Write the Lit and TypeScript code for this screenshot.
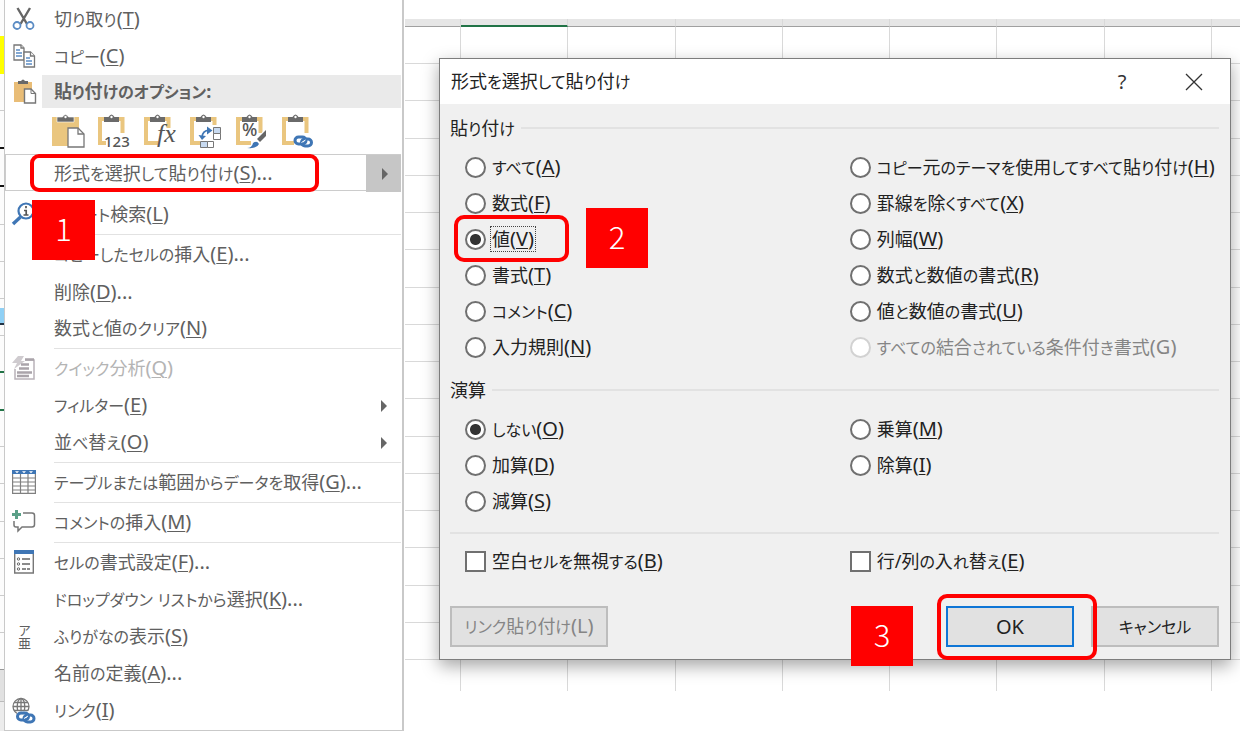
import { LitElement, html, css, svg, nothing, TemplateResult } from "lit";
import { customElement } from "lit/decorators.js";
import { classMap } from "lit/directives/class-map.js";

interface Item { text: string; key: string; more?: string; icon?: string; disabled?: boolean; arrow?: boolean; sep?: boolean; step?: string; }
interface Option { text: string; key: string; checked?: boolean; disabled?: boolean; focus?: boolean; }

const MENU_TOP: Item[] = [
  { text: "切り取り", key: "T", icon: "cut" },
  { text: "コピー", key: "C", icon: "copy" },
];

const MENU: Item[] = [
  { text: "スマート検索", key: "L", icon: "search", step: "1" },
  { text: "コピーしたセルの挿入", key: "E", more: "...", sep: true },
  { text: "削除", key: "D", more: "..." },
  { text: "数式と値のクリア", key: "N" },
  { text: "クイック分析", key: "Q", icon: "quick", disabled: true, sep: true },
  { text: "フィルター", key: "E", arrow: true },
  { text: "並べ替え", key: "O", arrow: true },
  { text: "テーブルまたは範囲からデータを取得", key: "G", more: "...", icon: "table", sep: true },
  { text: "コメントの挿入", key: "M", icon: "comment", sep: true },
  { text: "セルの書式設定", key: "F", more: "...", icon: "format", sep: true },
  { text: "ドロップダウン リストから選択", key: "K", more: "..." },
  { text: "ふりがなの表示", key: "S", icon: "ruby" },
  { text: "名前の定義", key: "A", more: "..." },
  { text: "リンク", key: "I", icon: "link" },
];

const PASTE: Option[][] = [
  [
    { text: "すべて", key: "A" },
    { text: "数式", key: "F" },
    { text: "値", key: "V", checked: true, focus: true },
    { text: "書式", key: "T" },
    { text: "コメント", key: "C" },
    { text: "入力規則", key: "N" },
  ],
  [
    { text: "コピー元のテーマを使用してすべて貼り付け", key: "H" },
    { text: "罫線を除くすべて", key: "X" },
    { text: "列幅", key: "W" },
    { text: "数式と数値の書式", key: "R" },
    { text: "値と数値の書式", key: "U" },
    { text: "すべての結合されている条件付き書式", key: "G", disabled: true },
  ],
];

const OPERATION: Option[][] = [
  [
    { text: "しない", key: "O", checked: true },
    { text: "加算", key: "D" },
    { text: "減算", key: "S" },
  ],
  [
    { text: "乗算", key: "M" },
    { text: "除算", key: "I" },
  ],
];

const chain = svg`<g fill="none" stroke="#3f76b5" stroke-width="3"><rect x="1.5" y="2" width="11" height="7" rx="3.5"/><rect x="8" y="4" width="10" height="7" rx="3.5"/></g><path d="M8 7.5l4-2.5" stroke="#fff" stroke-width="1"/>`;

const ICONS: Record<string, TemplateResult> = {
  cut: svg`<path d="M5.5 1L15 17M18 1L8.500 17" stroke="#666" stroke-width="2.400" fill="none"/><g fill="#fff" stroke="#5b8cc4" stroke-width="1.800"><circle cx="5" cy="18.500" r="3.500"/><circle cx="18" cy="18.500" r="3.500"/></g>`,
  copy: svg`<g fill="#fff" stroke="#777" stroke-width="1.300"><path d="M2 1h7l3 3v12H2z"/><path d="M9 1v3h3"/><path d="M12 8h6.500l4 4v11H12z"/><path d="M18.500 8v4h4"/></g><path d="M4 6h4M4 9h6M4 12h6M14 14h4M14 17h6M14 20h6" stroke="#5b8cc4" stroke-width="1.300"/>`,
  paste: svg`<path d="M2 3h18v20H2z" fill="#e9bd77"/><path d="M6 5V2h3q2-3 4 0h3v3z" fill="#696969"/><path d="M12.500 10H19l4.500 4.500V24h-11z" fill="#fff" stroke="#777" stroke-width="1.400"/><path d="M19 10v4.500h4.500" fill="none" stroke="#777"/>`,
  search: svg`<circle cx="14" cy="9" r="7.500" fill="#fff" stroke="#3f76b5" stroke-width="2.200"/><path d="M8.500 15L1 22" stroke="#3f76b5" stroke-width="3.400"/><path d="M14 4v2.200M12 8.500h2.200V13M11.500 13h5" stroke="#555" stroke-width="1.700" fill="none"/>`,
  quick: svg`<path d="M3 13v10h19V4h-9" fill="none" stroke="#b9b3b9" stroke-width="1.500"/><path d="M6 0h6L9 5h4L2 13l3-6H0z" fill="#cfcbcf"/><path d="M13 3.500h9M9 8.500h8M7 12.500h10M5 16.500h15M5 20h12" stroke="#aaa4aa" stroke-width="2.400"/>`,
  table: svg`<path d="M0 4h24v20H0z" fill="#fff"/><path d="M.600 4v19.400h22.800V4M8.500 4v19M16 4v19M0 8h24M0 12h24M0 16h24M0 20h24" fill="none" stroke="#808080" stroke-width="1.200"/><path d="M0 0h24v4H0z" fill="#3f76b5"/><path d="M3 1.200h4l-2 2zM10 1.200h4l-2 2zM17 1.200h4l-2 2z" fill="#fff"/>`,
  comment: svg`<path d="M11 3h9q2.500 0 2.500 2.500v9q0 2.500-2.500 2.500H10l-4 4v-4H4q-2 0-2-2V11" fill="none" stroke="#777" stroke-width="1.500"/><path d="M4.500 0v9M0 4.500h9" stroke="#5ba088" stroke-width="3"/>`,
  format: svg`<path d="M2.700 3h18.600v20H2.700z" fill="#fff" stroke="#777" stroke-width="1.400"/><path d="M2 0h20v4H2z" fill="#3f76b5"/><path d="M10 9h8M10 14h8" stroke="#666" stroke-width="1.500"/><path d="M10 19h8" stroke="#666" stroke-width="1.500" stroke-dasharray="4 1"/><g fill="#fff" stroke="#666"><circle cx="6.500" cy="9" r="1.200"/><circle cx="6.500" cy="14" r="1.200"/><circle cx="6.500" cy="19" r="1.200"/></g>`,
  link: svg`<g fill="none" stroke="#777" stroke-width="1.300"><circle cx="9" cy="8.500" r="8"/><ellipse cx="9" cy="8.500" rx="3.800" ry="8"/><path d="M9 .500v16M1 8.500h16M2 4.500h14M2 12.500h14"/></g><path d="M5 13h19v12H5z" fill="#fff" opacity=".8"/><g transform="translate(4 13)">${chain}</g>`,
};

const clip = svg`<path d="M8 5H2v24h13M19 5h5.500v14" fill="none" stroke="#eac67f" stroke-width="4"/><path d="M6 8V3h4.500q3-5 6 0H21v5z" fill="#6a6a6a"/><circle cx="13.500" cy="3" r="1.200" fill="#fff"/>`;
const PASTE_ICONS: [string, TemplateResult][] = [
  ["貼り付け", svg`<path d="M0 3h27v29H0z" fill="#eac67f"/><path d="M5 8V3h5.500q3-5 6 0H22v5z" fill="#6a6a6a" stroke="#fff" stroke-width=".6"/><circle cx="13.500" cy="3" r="1.200" fill="#fff"/><path d="M16 14h10l6 6v13H16z" fill="#fff" stroke="#777" stroke-width="1.300"/><path d="M26 14v6h6" fill="none" stroke="#777" stroke-width="1.300"/>`],
  ["値", svg`${clip}<path d="M8 20h24v13H8z" fill="#fff"/><text x="6" y="33" class="num">123</text>`],
  ["数式", svg`${clip}<path d="M17 14h10v19H14z" fill="#fff"/><text x="13" y="28" class="fx">fx</text>`],
  ["行/列の入れ替え", svg`${clip}<path d="M10 11h22v22H10z" fill="#fff"/><g fill="#fff" stroke="#777"><path d="M23.500 13.500h7v6h-7z" fill="#c8daf0"/><path d="M23.500 19.500h7v6h-7z"/><path d="M10.500 27.500h7v6h-7z" fill="#c8daf0"/><path d="M17.500 27.500h6v6h-6z"/></g><path d="M12 24q0-8 8-7.500" fill="none" stroke="#3f76b5" stroke-width="1.800"/><path d="M8.500 21l3.500 5 4-4zM17 12.500l5.500 4-5.500 4z" fill="#3f76b5"/>`],
  ["書式設定", svg`${clip}<text x="6" y="22" class="pct">%</text><path d="M13 33l17-19v10l-9 9z" fill="#fff"/><path d="M30 16v6l-6 6-3-3z" fill="#666"/><path d="M11 34q5 0 6-5 4-3 6 1-2 5-12 4z" fill="#3f76b5"/>`],
  ["リンク貼り付け", svg`${clip}<path d="M12 20h20v13H12z" fill="#fff"/><g transform="translate(11.500 21)">${chain}</g>`],
];

// Kana are set a step smaller than kanji, as in a UI face with compact kana.
const mixed = (text: string) =>
  text.split(/([\u3040-\u30ff]+)/).map((run, i) => (i % 2 ? html`<span class="kana">${run}</span>` : run));

const caption = (o: { text: string; key: string; more?: string; disabled?: boolean }) =>
  html`${mixed(o.text)}<span class="latin">(${o.disabled ? o.key : html`<u>${o.key}</u>`})${o.more ?? nothing}</span>`;

const FONT = css`"Noto Sans", "Noto Sans CJK JP", sans-serif`;

const type = css`
  .kana { font-size: 16px; }
  .latin { font-size: 20px; }
  u { text-decoration-thickness: 1px; text-underline-offset: 2px; }
`;

@customElement("sheet-edge")
class SheetEdge extends LitElement {
  static styles = css`
    :host { display: block; background: #fcfcfc; overflow: hidden; }
    .edge { display: block; }
  `;
  render() {
    const lines: [number, number, string][] = [
      [36, 38, "#ffff00"], [110, 1, "#ccc"], [147, 2, "#111"], [185, 2, "#111"], [224, 1, "#ccc"], [261, 1, "#ccc"],
      [298, 1, "#ccc"], [308, 15, "#8fd0f5"], [323, 2, "#234"], [335, 1, "#ccc"], [371, 2, "#217346"], [409, 2, "#217346"],
      [446, 1, "#ccc"], [483, 1, "#ccc"], [521, 1, "#ccc"], [558, 1, "#ccc"], [595, 1, "#ccc"], [632, 1, "#ccc"],
      [669, 1, "#999"], [670, 31, "#e1e1e1"], [701, 1, "#bbb"], [702, 29, "#ececec"],
    ];
    return html`<svg class="edge" width="4" height="731" aria-hidden="true">
      ${lines.map(([y, h, c]) => svg`<rect x="0" y=${y} width="4" height=${h} fill=${c} />`)}
    </svg>`;
  }
}

@customElement("context-menu")
class ContextMenu extends LitElement {
  static styles = [type, css`
    :host { display: block; font: 18px/36px ${FONT}; font-feature-settings: "palt"; color: #606060; }
    .menu { box-sizing: border-box; min-height: 100%; padding: 1px 1px 1px 0; background: #fff; border: solid #c9c9c9; border-width: 0 2px 1px 1px; }
    button { font: inherit; font-feature-settings: inherit; color: inherit; background: none; border: 0; padding: 0; margin: 0; text-align: left; }
    .item { position: relative; display: grid; grid-template-columns: 49px 1fr 24px; align-items: center; width: 100%; height: 37px; white-space: nowrap; }
    .disabled { color: #b4b4b4; }
    .icon { width: 24px; height: 26px; margin-left: 7px; overflow: visible; }
    .ruby { width: 24px; height: 26px; margin-left: 7px; font-size: 13px; line-height: 24px; writing-mode: vertical-rl; font-feature-settings: normal; }
    .arrow { width: 8px; height: 12px; margin-left: 3px; fill: #666; }
    .sep { height: 1px; margin: 1px 0 1px 49px; background: #e2e2e2; }
    .gap { height: 5px; }
    .heading { display: grid; grid-template-columns: 37px 1fr; align-items: center; height: 33px; }
    .title { height: 33px; margin: 0; padding-left: 12px; font-size: 18px; line-height: 33px; font-weight: 700; background: #eaeaea; }
    .tools { display: flex; gap: 13px; height: 46px; padding-left: 47px; align-items: center; box-sizing: border-box; }
    .tool { width: 33px; height: 35px; }
    .glyph { display: block; width: 33px; height: 35px; overflow: visible; }
    .num { font: 500 15px "Noto Sans"; fill: #555; }
    .fx { font: italic 26px "Liberation Serif"; fill: #555; }
    .pct { font: 500 18px "Noto Sans"; fill: #555; }
    .split { position: relative; display: grid; grid-template-columns: 1fr 35px; height: 37px; box-sizing: border-box; border: 1px solid #ccc; border-right: 0; }
    .main { padding-left: 48px; line-height: 35px; }
    .more { display: grid; place-items: center; background: #c6c6c6; }
    .mark { position: absolute; inset: -1px 82px -2px 24px; border: 4px solid #f00; border-radius: 9px; pointer-events: none; }
    .step { position: absolute; left: 27px; top: 4px; z-index: 1; width: 63px; height: 60px; background: #f00; color: #fff; font: 300 31px/56px "Noto Sans CJK JP", sans-serif; text-align: center; }
  `];
  icon(name?: string) {
    if (!name) return html`<span></span>`;
    if (name === "ruby") return html`<span class="ruby">ア亜</span>`;
    return html`<svg class="icon" viewBox="0 0 24 26" aria-hidden="true">${ICONS[name]}</svg>`;
  }
  item(i: Item) {
    return html`${i.sep ? html`<div class="sep" role="separator"></div>` : nothing}
      <button class=${classMap({ item: true, disabled: !!i.disabled })} role="menuitem" ?disabled=${i.disabled}>
        ${this.icon(i.icon)}<span>${caption({ ...i, disabled: false })}</span>
        ${i.arrow ? html`<svg class="arrow" viewBox="0 0 8 12"><path d="M1 0l6 6-6 6z" /></svg>` : nothing}
        ${i.step ? html`<span class="step">${i.step}</span>` : nothing}
      </button>`;
  }
  render() {
    return html`<div class="menu" role="menu">
      ${MENU_TOP.map((i) => this.item(i))}
      <div class="heading">${this.icon("paste")}<h2 class="title">${mixed("貼り付けのオプション:")}</h2></div>
      <div class="tools">
        ${PASTE_ICONS.map(([name, g]) => html`<button class="tool" role="menuitem" aria-label=${name}><svg class="glyph" viewBox="0 0 33 35">${g}</svg></button>`)}
      </div>
      <div class="split">
        <button class="main" role="menuitem">${caption({ text: "形式を選択して貼り付け", key: "S", more: "..." })}</button>
        <button class="more" aria-label="サブメニュー"><svg class="arrow" viewBox="0 0 8 12"><path d="M1 0l6 6-6 6z" /></svg></button>
        <span class="mark"></span>
      </div>
      <div class="gap"></div>
      ${MENU.map((i) => this.item(i))}
    </div>`;
  }
}

@customElement("sheet-grid")
class SheetGrid extends LitElement {
  static styles = css`
    :host { display: flex; flex-direction: column; padding-top: 19px; }
    .row { display: grid; grid-template-columns: 56px repeat(7, 1fr) 28px; flex: 1; }
    .cell { border-right: 1px solid #d9d9d9; border-bottom: 1px solid #d9d9d9; }
    .cell:last-child { border-right: 0; }
    .head { flex: 0 0 8px; background: #e6e6e6; }
    .head .cell { border-bottom-color: #a0a0a0; }
    .head .active { border-bottom: 2px solid #217346; }
    .last { flex: 0 0 31px; }
    .last .cell { border-bottom: 0; }
  `;
  row(kind = "") {
    return html`<div class="row ${kind}">${Array.from({ length: 9 }, (_, i) => html`<div class=${classMap({ cell: true, active: i === 1 })}></div>`)}</div>`;
  }
  render() {
    return html`${this.row("head")}${Array.from({ length: 17 }, () => this.row())}${this.row("last")}`;
  }
}

@customElement("paste-dialog")
class PasteDialog extends LitElement {
  static styles = [type, css`
    :host { display: block; font: 18px/24px ${FONT}; font-feature-settings: "palt"; color: #222; }
    .dialog { border: 1px solid #7d7d7d; background: #f0f0f0; box-shadow: 0 6px 16px rgba(0, 0, 0, 0.35); }
    .bar { display: flex; align-items: center; height: 45px; padding: 0 26px 0 11px; background: #fff; }
    .name { flex: 1; margin: 0; font-size: 18px; font-weight: 400; }
    .win { display: grid; place-items: center; width: 20px; height: 32px; margin-left: 52px; padding: 0; border: 0; background: none; font: 20px "Noto Sans"; color: #333; }
    .body { padding: 12px 11px 12px 10px; }
    fieldset { margin: 0 0 13px; padding: 0; border: 0; min-width: 0; }
    .legend { display: flex; align-items: center; gap: 6px; width: 100%; height: 24px; padding: 0; margin-bottom: 9px; }
    .line { flex: 1; height: 2px; background: #e2e2e2; }
    .options { display: grid; grid-template-columns: minmax(0, 25fr) minmax(0, 24fr); padding-left: 15px; }
    .option { position: relative; display: flex; align-items: center; gap: 4px; height: 36px; white-space: nowrap; }
    input { appearance: none; flex: none; box-sizing: border-box; width: 21px; height: 21px; margin: 0; border: 2px solid #707070; background: #fff; }
    input[type="radio"] { border-radius: 50%; }
    input:checked { background: radial-gradient(circle, #333 5px, #fff 6px); }
    input:disabled { border-color: #d2d2d2; }
    .text { padding: 0 1px; border: 1px solid transparent; }
    .focus { border: 1px dotted #444; }
    .off { color: #858585; }
    .rule { height: 2px; margin-bottom: 9px; background: #e2e2e2; }
    .actions { position: relative; display: flex; gap: 17px; margin-top: 27px; }
    .btn { box-sizing: border-box; width: 128px; height: 41px; padding: 0; border: 2px solid #bdbdbd; background: #e1e1e1; font: inherit; font-feature-settings: inherit; color: inherit; }
    .wide { width: 158px; margin-right: auto; color: #858585; }
    .primary { border-color: #0f76d6; }
    .mark { position: absolute; z-index: 1; box-sizing: border-box; border: 4px solid #f00; border-radius: 10px; pointer-events: none; }
    .around-option { left: -11px; top: -6px; width: 115px; height: 47px; }
    .around-ok { right: 122px; top: -12px; width: 160px; height: 66px; }
    .step { position: absolute; z-index: 1; width: 62px; height: 60px; background: #f00; color: #fff; font: 300 31px/56px "Noto Sans CJK JP", sans-serif; text-align: center; }
    .beside-option { left: 121px; top: -13px; }
    .beside-ok { right: 306px; top: 0; }
  `];
  option(o: Option, group: string) {
    return html`<label class="option">
      <input type="radio" name=${group} .checked=${!!o.checked} ?disabled=${o.disabled} />
      <span class=${classMap({ text: true, focus: !!o.focus, off: !!o.disabled })}>${caption(o)}</span>
      ${o.focus ? html`<span class="mark around-option"></span><span class="step beside-option">2</span>` : nothing}
    </label>`;
  }
  group(title: string, name: string, columns: Option[][]) {
    return html`<fieldset>
      <legend class="legend"><span>${mixed(title)}</span><span class="line"></span></legend>
      <div class="options">${columns.map((c) => html`<div>${c.map((o) => this.option(o, name))}</div>`)}</div>
    </fieldset>`;
  }
  render() {
    return html`<section class="dialog" role="dialog" aria-labelledby="name">
      <header class="bar">
        <h1 class="name" id="name">${mixed("形式を選択して貼り付け")}</h1>
        <button class="win" aria-label="ヘルプ">?</button>
        <button class="win" aria-label="閉じる"><svg width="18" height="18" viewBox="0 0 18 18"><path d="M1 1l16 16M17 1L1 17" stroke="#333" stroke-width="1.300" /></svg></button>
      </header>
      <div class="body">
        ${this.group("貼り付け", "paste", PASTE)}
        ${this.group("演算", "operation", OPERATION)}
        <div class="rule"></div>
        <div class="options">
          <label class="option"><input type="checkbox" /><span class="text">${caption({ text: "空白セルを無視する", key: "B" })}</span></label>
          <label class="option"><input type="checkbox" /><span class="text">${caption({ text: "行/列の入れ替え", key: "E" })}</span></label>
        </div>
        <div class="actions">
          <button class="btn wide" disabled>${caption({ text: "リンク貼り付け", key: "L", disabled: true })}</button>
          <button class="btn primary"><span class="latin">OK</span></button>
          <button class="btn">${mixed("キャンセル")}</button>
          <span class="mark around-ok"></span>
          <span class="step beside-ok">3</span>
        </div>
      </div>
    </section>`;
  }
}

@customElement("app-root")
class AppRoot extends LitElement {
  static styles = css`
    :host { display: block; background: #fff; }
    .page { display: grid; grid-template-columns: 4px 400px minmax(0, 1fr); min-height: 100vh; overflow: hidden; }
    .work { display: grid; padding-left: 1px; align-items: start; }
    .sheet { grid-area: 1 / 1; align-self: stretch; margin-bottom: 40px; }
    .window { grid-area: 1 / 1; margin: 58px 9px 71px 34px; }
  `;
  render() {
    return html`<main class="page">
      <sheet-edge></sheet-edge>
      <context-menu></context-menu>
      <div class="work">
        <sheet-grid class="sheet"></sheet-grid>
        <paste-dialog class="window"></paste-dialog>
      </div>
    </main>`;
  }
}
